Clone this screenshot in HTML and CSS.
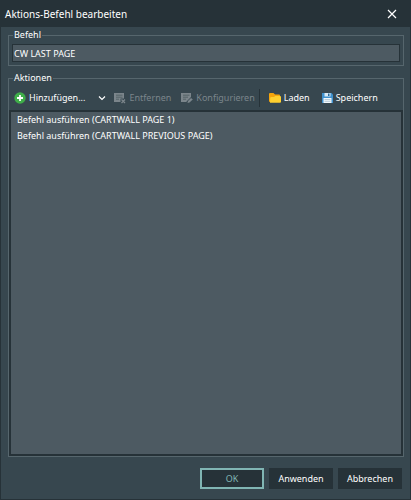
FILE: index.html
```
<!DOCTYPE html>
<html lang="de">

<head>
    <meta charset="UTF-8">
    <meta name="viewport" content="width=device-width, initial-scale=1.0">
    <title>Aktions-Befehl bearbeiten</title>

    <link rel="stylesheet" href="styles.css">
</head>

<body>
    <form class="dialog">
        <header class="titlebar">
            <h1>Aktions-Befehl bearbeiten</h1>
            <button type="button" class="close" aria-label="Schließen">
                <svg width="10" height="10" viewBox="0 0 10 10"><path d="M1 1L9 9M9 1L1 9" stroke="#fff" stroke-width="1.2" fill="none"/></svg>
            </button>
        </header>

        <fieldset class="group">
            <legend><label for="command">Befehl</label></legend>
            <input id="command" class="command" type="text" value="CW LAST PAGE">
        </fieldset>

        <fieldset class="group actions">
            <legend>Aktionen</legend>
            <div class="toolbar">
                <button type="button" class="tool add">
                    <svg width="12" height="12" viewBox="0 0 12 12"><circle cx="6" cy="6" r="5.7" fill="#3fae49"/><path d="M6 3V9M3 6H9" stroke="#fff" stroke-width="1.8"/></svg>
                    Hinzufügen...
                </button>
                <button type="button" class="tool drop" aria-label="Weitere Aktionen">
                    <svg width="8" height="6" viewBox="0 0 8 6"><path d="M1 1.5L4 4.5L7 1.5" stroke="#fff" stroke-width="1.2" fill="none"/></svg>
                </button>
                <button type="button" class="tool remove" disabled>
                    <svg width="12" height="12" viewBox="0 0 12 12"><path d="M0 1H10V6.5H6.5V10H0Z" fill="#7b858b"/><path d="M2 3.2H8.5M2 5.2H8.5M2 7.2H5" stroke="#4b5960" stroke-width=".8"/><path d="M7.5 7.5L11 11M11 7.5L7.5 11" stroke="#7b858b" stroke-width="1.3"/></svg>
                    Entfernen
                </button>
                <button type="button" class="tool configure" disabled>
                    <svg width="12" height="12" viewBox="0 0 12 12"><path d="M0 1H10V5L5.5 9.5V10H0Z" fill="#7b858b"/><path d="M2 3.2H8.5M2 5.2H7M2 7.2H5" stroke="#4b5960" stroke-width=".8"/><path d="M6.5 11L7 9L10 6L11.8 7.5L8.5 10.5Z" fill="#7b858b"/></svg>
                    Konfigurieren
                </button>
                <span class="separator"></span>
                <button type="button" class="tool load">
                    <svg width="12" height="12" viewBox="0 0 12 12"><path d="M0 2Q0 1 1 1H4.5L6 2.5H10Q11 2.5 11 3.5V10H1Q0 10 0 9Z" fill="#f5a50c"/><path d="M1 10.5L1.2 6Q1.3 5 2.3 5H5L6.2 4H11Q12 4 12 5V9.8Q12 10.8 11 10.8H1Z" fill="#ffd02f"/></svg>
                    Laden
                </button>
                <button type="button" class="tool save">
                    <svg width="11" height="12" viewBox="0 0 11 12"><path d="M0 1H9.5L11 2.5V11H0Z" fill="#3f91cd"/><path d="M2.5 1H8.5V4.5H2.5Z" fill="#d7e9f4"/><path d="M6 1.5H7.5V4H6Z" fill="#286895"/><path d="M1.5 6H9.5V11H1.5Z" fill="#f2f7fa"/><path d="M2.5 7.5H8.5M2.5 9.3H8.5" stroke="#9db9ca" stroke-width=".7"/></svg>
                    Speichern
                </button>
            </div>
            <ul class="list">
                <li>Befehl ausführen (CARTWALL PAGE 1)</li>
                <li>Befehl ausführen (CARTWALL PREVIOUS PAGE)</li>
            </ul>
        </fieldset>

        <footer class="buttons">
            <button type="submit" class="btn primary">OK</button>
            <button type="button" class="btn">Anwenden</button>
            <button type="button" class="btn">Abbrechen</button>
        </footer>
    </form>
</body>

</html>
```
FILE: styles.css
```
* {
    box-sizing: border-box;
}

body {
    margin: 0;
    background-color: #37474f;
    color: #fff;
    font-family: "Noto Sans", "Open Sans", sans-serif;
    font-size: 9px;
    line-height: 16px;
}

button,
input {
    font: inherit;
    color: inherit;
}

.dialog {
    min-height: 100vh;
    border: 1px solid #263238;
    border-top: 0;
}

.titlebar {
    display: flex;
    align-items: center;
    justify-content: space-between;
    height: 27px;
    padding: 0 13px 0 4px;
    background-color: #263238;
}

h1 {
    margin: 0;
    font-size: 10px;
    font-weight: 400;
}

.close {
    display: flex;
    padding: 0;
    border: 0;
    background: none;
}

.group {
    min-width: 0;
    margin: 0 6px 0 7px;
    padding: 0 3px 3px;
    border: 1px solid #56666d;
}

legend {
    margin-left: 1px;
    padding: 0 1px;
}

.command {
    display: block;
    width: 100%;
    height: 18px;
    margin-top: 1px;
    padding: 0 1px;
    border: 1px solid #263238;
    background-color: #4d5a62;
    outline: 0;
}

.actions {
    margin-top: 4px;
    padding: 0;
}

.actions legend {
    margin-left: 4px;
}

.toolbar {
    display: flex;
    align-items: center;
    height: 24px;
    padding-left: 5px;
}

.tool {
    display: flex;
    align-items: center;
    gap: 3px;
    padding: 0;
    border: 0;
    background: none;
    white-space: nowrap;
}

.tool:disabled {
    color: #7b858b;
}

.drop {
    margin: 0 8px 0 13px;
}

.configure {
    margin-left: 10px;
}

.separator {
    width: 1px;
    height: 18px;
    margin: 0 9px 0 4px;
    background-color: #263238;
}

.save {
    margin-left: 12px;
}

.list {
    min-height: calc(100vh - 154px);
    margin: 0;
    padding: 0 6px;
    border: 2px solid #263238;
    background-color: #4d5a62;
    list-style: none;
}

.buttons {
    display: flex;
    justify-content: flex-end;
    gap: 5px;
    padding: 11px 8px 10px;
}

.btn {
    width: 64px;
    height: 21px;
    padding: 0;
    border: 1px solid #263238;
    background-color: #263238;
}

.primary {
    border: 2px solid #80b5b3;
    color: #80b5b3;
}
```
